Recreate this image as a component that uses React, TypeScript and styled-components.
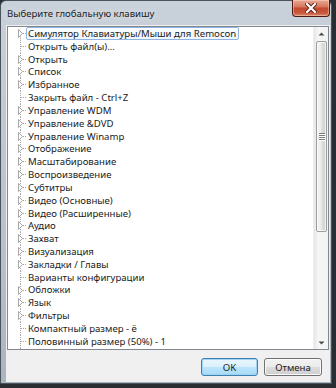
import styled, { createGlobalStyle } from "styled-components";

//#region  styled css

const GlobalStyle = createGlobalStyle`
    html, body {
        margin: 0;
        padding: 0;
        width: 336px;
        height: 388px;
        overflow: hidden;
        background: #2a2e33;
    }
    * { box-sizing: border-box; }
`;

const DialogWindow = styled.div`
    width: 332px;
    height: 384px;
    display: flex;
    flex-direction: column;
    padding: 0 1px 1px 5px;
    border: 1px solid #4a525c;
    border-radius: 6px 6px 0 0;
    background: linear-gradient(180deg, #c9d1da 0%, #bfc8d2 35%, #b6c0cb 70%, #aab4bf 100%);
    font-family: "Noto Sans", "Liberation Sans", sans-serif;
`;

const TitleBar = styled.div`
    height: 24px;
    display: flex;
    align-items: flex-start;
    padding-left: 1px;
`;

const TitleText = styled.div`
    padding-top: 6px;
    font-size: 9.6px;
    color: #1c1c1c;
    text-shadow: 0 0 6px rgba(255, 255, 255, 0.8);
`;

const CloseBtn = styled.div`
    margin-left: auto;
    margin-top: -1px;
    width: 38px;
    height: 17px;
    display: flex;
    align-items: center;
    justify-content: center;
    border: 1px solid #4d1a12;
    border-top: none;
    border-radius: 0 0 4px 4px;
    background: linear-gradient(180deg, #e9a895 0%, #d97a63 40%, #c24a30 52%, #c9573b 80%, #d98a6c 100%);
    box-shadow: inset 0 0 0 1px rgba(255, 220, 200, 0.45);
`;

const ClientArea = styled.div`
    flex: 1;
    display: flex;
    flex-direction: column;
    padding: 1px 1px 0 1px;
    background: #f0f0f0;
`;

const TreePanel = styled.div`
    height: 324px;
    display: flex;
    border: 1px solid #828790;
    background: #ffffff;
`;

const TreeList = styled.div`
    flex: 1;
    overflow: hidden;
`;

const TreeRow = styled.div`
    height: 12.83px;
    display: flex;
    align-items: stretch;
`;

const Connector = styled.svg`
    width: 18px;
    height: 12.83px;
    flex-shrink: 0;
`;

const NodeLabel = styled.div<{ $selected?: boolean }>`
    display: flex;
    align-items: center;
    padding: 0 2px 0 1px;
    font-size: 9.6px;
    color: #1b1b1b;
    white-space: nowrap;
    border: 1px solid ${p => (p.$selected ? "#8fb4e2" : "transparent")};
    border-radius: 2px;
    background: ${p => (p.$selected ? "linear-gradient(180deg, #fbfdff 0%, #eef5fd 100%)" : "transparent")};
`;

const ScrollBar = styled.div`
    width: 15px;
    display: flex;
    flex-direction: column;
    background: linear-gradient(90deg, #e6e6e6 0%, #f6f6f6 30%, #f3f3f3 100%);
    border-left: 1px solid #efefef;
`;

const ArrowBtn = styled.div`
    height: 13px;
    display: flex;
    align-items: center;
    justify-content: center;
`;

const Track = styled.div`
    flex: 1;
    padding: 1px 1px 0 2px;
`;

const Thumb = styled.div`
    height: 191px;
    display: flex;
    flex-direction: column;
    align-items: center;
    justify-content: center;
    gap: 1px;
    border: 1px solid #9c9c9c;
    border-radius: 2px;
    background: linear-gradient(90deg, #f4f4f4 0%, #ececec 45%, #dcdcdc 55%, #d2d2d2 100%);
    box-shadow: inset 0 0 0 1px rgba(255, 255, 255, 0.7);
`;

const Grip = styled.div`
    width: 6px;
    height: 1px;
    background: #7c7c7c;
    box-shadow: 0 1px 0 #ffffff;
`;

const Footer = styled.div`
    display: flex;
    justify-content: flex-end;
    gap: 6px;
    padding: 8px 7px 0 0;
`;

const DialogBtn = styled.button<{ $default?: boolean }>`
    width: ${p => (p.$default ? "57px" : "58px")};
    height: 18px;
    padding: 0;
    font-family: "Noto Sans", "Liberation Sans", sans-serif;
    font-size: 9.6px;
    color: #1b1b1b;
    border-radius: 3px;
    border: 1px solid ${p => (p.$default ? "#3c7fb1" : "#707070")};
    background: ${p =>
        p.$default
            ? "linear-gradient(180deg, #eaf6fd 0%, #d9f0fc 50%, #bee6fd 50%, #a7d9f5 100%)"
            : "linear-gradient(180deg, #f2f2f2 0%, #ebebeb 50%, #dddddd 50%, #cfcfcf 100%)"};
    box-shadow: inset 0 0 0 1px ${p => (p.$default ? "#9ed4f2" : "#fbfbfb")};
`;
//#endregion

type TreeNode = { text: string; folder: boolean };

const nodes: TreeNode[] = [
    { text: "Симулятор Клавиатуры/Мыши для Remocon", folder: true },
    { text: "Открыть файл(ы)...", folder: false },
    { text: "Открыть", folder: true },
    { text: "Список", folder: true },
    { text: "Избранное", folder: true },
    { text: "Закрыть файл - Ctrl+Z", folder: false },
    { text: "Управление WDM", folder: true },
    { text: "Управление &DVD", folder: true },
    { text: "Управление Winamp", folder: true },
    { text: "Отображение", folder: true },
    { text: "Масштабирование", folder: true },
    { text: "Воспроизведение", folder: true },
    { text: "Субтитры", folder: true },
    { text: "Видео (Основные)", folder: true },
    { text: "Видео (Расширенные)", folder: true },
    { text: "Аудио", folder: true },
    { text: "Захват", folder: true },
    { text: "Визуализация", folder: true },
    { text: "Закладки / Главы", folder: true },
    { text: "Варианты конфигурации", folder: false },
    { text: "Обложки", folder: true },
    { text: "Язык", folder: true },
    { text: "Фильтры", folder: true },
    { text: "Компактный размер - ё", folder: false },
    { text: "Половинный размер (50%) - 1", folder: false },
    { text: "Нормальный размер (100%) - 2", folder: false },
];

const TreeLines = ({ folder, first }: { folder: boolean; first: boolean }) => (
    <Connector viewBox="0 0 18 12.83">
        <line x1="12.5" y1={first ? 6.5 : 0} x2="12.5" y2="12.83" stroke="#a3a3a3" strokeWidth="1" strokeDasharray="1 1" />
        <line x1="13" y1="6.5" x2="18" y2="6.5" stroke="#a3a3a3" strokeWidth="1" strokeDasharray="1 1" />
        {folder && (
            <path d="M10.5 2.5 L14.5 6.5 L10.5 10.5 Z" fill="#ffffff" stroke="#a6a6a6" strokeWidth="1" strokeLinejoin="round" />
        )}
    </Connector>
);

const App = () => {
    return (
        <>
            <GlobalStyle />
            <DialogWindow>
                <TitleBar>
                    <TitleText>Выберите глобальную клавишу</TitleText>
                    <CloseBtn>
                        <svg width="12" height="10" viewBox="0 0 12 10">
                            <path d="M2 1 L10 9 M10 1 L2 9" stroke="#5a1c12" strokeWidth="4" strokeLinecap="square" />
                            <path d="M2 1 L10 9 M10 1 L2 9" stroke="#ffffff" strokeWidth="2.2" strokeLinecap="square" />
                        </svg>
                    </CloseBtn>
                </TitleBar>

                <ClientArea>
                    <TreePanel>
                        <TreeList>
                            {nodes.map((n, i) => (
                                <TreeRow key={n.text}>
                                    <TreeLines folder={n.folder} first={i === 0} />
                                    <NodeLabel $selected={i === 0}>{n.text}</NodeLabel>
                                </TreeRow>
                            ))}
                        </TreeList>
                        <ScrollBar>
                            <ArrowBtn>
                                <svg width="7" height="4" viewBox="0 0 7 4">
                                    <path d="M0.5 3.5 L3.5 0.5 L6.5 3.5 Z" fill="#4d4d4d" />
                                </svg>
                            </ArrowBtn>
                            <Track>
                                <Thumb>
                                    <Grip />
                                    <Grip />
                                    <Grip />
                                    <Grip />
                                </Thumb>
                            </Track>
                            <ArrowBtn>
                                <svg width="7" height="4" viewBox="0 0 7 4">
                                    <path d="M0.5 0.5 L3.5 3.5 L6.5 0.5 Z" fill="#4d4d4d" />
                                </svg>
                            </ArrowBtn>
                        </ScrollBar>
                    </TreePanel>

                    <Footer>
                        <DialogBtn $default>OK</DialogBtn>
                        <DialogBtn>Отмена</DialogBtn>
                    </Footer>
                </ClientArea>
            </DialogWindow>
        </>
    );
};

export default App;
